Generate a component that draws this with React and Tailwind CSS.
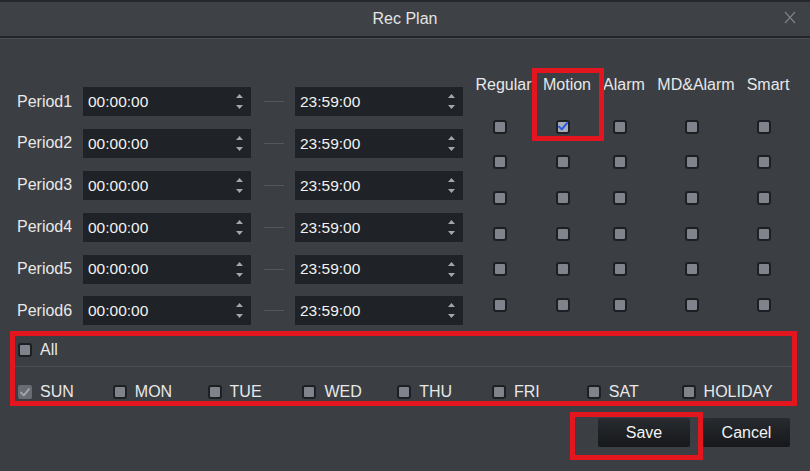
import React from "react";

const periods = ["Period1", "Period2", "Period3", "Period4", "Period5", "Period6"];
const columns = [
  { label: "Regular", width: "w-[67px]" },
  { label: "Motion", width: "w-[60px]" },
  { label: "Alarm", width: "w-[54px]" },
  { label: "MD&Alarm", width: "w-[90px]" },
  { label: "Smart", width: "w-[54px]" },
];
const days = ["SUN", "MON", "TUE", "WED", "THU", "FRI", "SAT", "HOLIDAY"];

function Check({ color }) {
  return (
    <svg width="10" height="9" viewBox="0 0 10 9" fill="none">
      <path d="M1 4.6 L3.8 7.4 L9 1.2" stroke={color} strokeWidth="2" strokeLinecap="round" strokeLinejoin="round" />
    </svg>
  );
}

function Box({ checked = false, muted = false }) {
  if (muted) {
    return (
      <span className="flex h-[14px] w-[14px] shrink-0 items-center justify-center rounded-[2px] bg-[#696c73]">
        <Check color="#a2a5ab" />
      </span>
    );
  }

  return (
    <span
      className={`flex h-[14px] w-[14px] shrink-0 items-center justify-center rounded-[3px] border-2 border-[#1d1f23] ${
        checked ? "bg-[#a6abb7]" : "bg-[#80838b]"
      }`}
    >
      {checked && <Check color="#2457e6" />}
    </span>
  );
}

function Spinner() {
  return (
    <span className="flex flex-col items-center gap-[7px] pr-[8px]">
      <svg width="7" height="4" viewBox="0 0 7 4">
        <path d="M3.5 0 L7 4 L0 4 Z" fill="#a3a6ab" />
      </svg>
      <svg width="7" height="4" viewBox="0 0 7 4">
        <path d="M0 0 L7 0 L3.5 4 Z" fill="#a3a6ab" />
      </svg>
    </span>
  );
}

function TimeInput({ value }) {
  return (
    <div className="flex h-[29px] w-[168px] items-center justify-between bg-[#1f2226] pl-[5px] text-[15.5px] text-[#f2f2f2]">
      <span>{value}</span>
      <Spinner />
    </div>
  );
}

export default function App() {
  return (
    <div className="relative h-[471px] w-[810px] overflow-hidden bg-[#3b3e43] font-['Liberation_Sans',Arial,sans-serif] text-[#e8e8e8]">
      {/* title bar */}
      <div className="relative flex h-[38px] items-center justify-center border-t-2 border-b-2 border-t-[#26282c] border-b-[#222427] bg-[#3e4146]">
        <span className="text-[16px] text-[#e4e4e4]">Rec Plan</span>
        <svg className="absolute right-[14px] top-[9px]" width="12" height="13" viewBox="0 0 12 13">
          <path d="M1 1 L11 12 M11 1 L1 12" stroke="#7d8085" strokeWidth="1.2" />
        </svg>
      </div>
      <div className="h-px bg-[#4a4d52]" />

      {/* periods + record types */}
      <div className="flex h-[292px] items-start">
        <div className="flex w-[470px] flex-col gap-[12.9px] pt-[48px]">
          {periods.map((p) => (
            <div key={p} className="flex h-[29px] items-center">
              <span className="w-[83px] pl-[17px] text-[16px]">{p}</span>
              <TimeInput value="00:00:00" />
              <span className="flex w-[44px] justify-center pl-[2px]">
                <span className="h-px w-[20px] bg-[#54575c]" />
              </span>
              <TimeInput value="23:59:00" />
            </div>
          ))}
        </div>

        <div className="flex flex-col pt-[37px]">
          <div className="flex h-[18px] items-center">
            {columns.map((c) => (
              <span key={c.label} className={`${c.width} whitespace-nowrap text-center text-[16px]`}>
                {c.label}
              </span>
            ))}
          </div>
          <div className="mt-[15px] flex flex-col">
            {periods.map((p, row) => (
              <div key={p} className="flex h-[35.6px] items-center">
                {columns.map((c, col) => (
                  <span key={c.label} className={`${c.width} flex justify-center pr-[8px]`}>
                    <Box checked={row === 0 && col === 1} />
                  </span>
                ))}
              </div>
            ))}
          </div>
        </div>
      </div>

      {/* weekdays */}
      <div className="ml-[10px] w-[787px] border-[5px] border-[#e3151f]">
        <div className="flex h-[28px] items-center gap-[8px] pl-[3px] text-[16px]">
          <Box />
          <span>All</span>
        </div>
        <div className="mt-[2px] h-px bg-[#4b4e53]" />
        <div className="flex h-[34px] items-center pl-[3px] pt-[16px]">
          {days.map((d, i) => (
            <div key={d} className="flex w-[94.8px] items-center gap-[8px] text-[16px]">
              <Box muted={i === 0} />
              <span>{d}</span>
            </div>
          ))}
        </div>
      </div>

      {/* buttons */}
      <div className="mt-[12px] flex justify-end gap-[13px] pr-[20px]">
        <button
          type="button"
          className="h-[29px] w-[92px] rounded-[2px] bg-linear-to-b from-[#282b2f] to-[#16181b] text-[16px] text-[#f2f2f2]"
        >
          Save
        </button>
        <button
          type="button"
          className="h-[29px] w-[87px] rounded-[2px] bg-linear-to-b from-[#282b2f] to-[#16181b] text-[16px] text-[#f2f2f2]"
        >
          Cancel
        </button>
      </div>

      {/* annotation boxes */}
      <div className="pointer-events-none absolute left-[532px] top-[68px] h-[73px] w-[72px] border-[5px] border-[#e3151f]" />
      <div className="pointer-events-none absolute left-[570px] top-[412px] h-[48px] w-[133px] border-[5px] border-[#e3151f]" />
    </div>
  );
}
